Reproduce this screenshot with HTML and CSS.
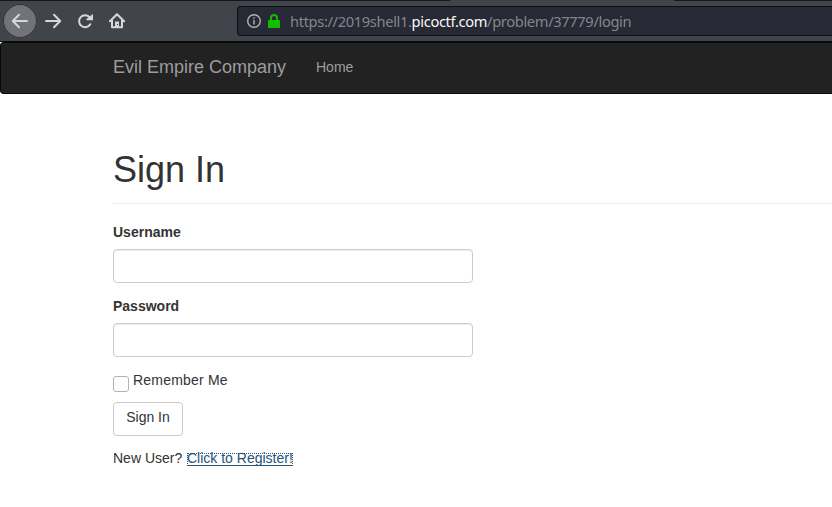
FILE: index.html
```html
<!DOCTYPE html>
<html lang="en">
<head>
<meta charset="utf-8">
<title>Sign In</title>
<link rel="stylesheet" href="styles.css">
</head>
<body>
<header class="toolbar">
  <button class="tool back" aria-label="Back"><svg width="34" height="34" viewBox="0 0 34 34"><path d="M24 17H10M16 10.8 9.8 17l6.2 6.2"/></svg></button>
  <button class="tool" aria-label="Forward"><svg width="32" height="32" viewBox="0 0 32 32"><path d="M9 16h14M17 9.8l6.2 6.2-6.2 6.2"/></svg></button>
  <button class="tool" aria-label="Reload"><svg width="32" height="32" viewBox="0 0 32 32"><path d="M21.3 19.2A6 6 0 1 1 20.6 12.2"/><path class="solid" d="M24 9v6.3h-6.6v-1.2z"/></svg></button>
  <button class="tool" aria-label="Home"><svg width="32" height="32" viewBox="0 0 32 32"><path d="M8.9 16.3 16 9.2l7.1 7.1M11 15v7.2h10V15"/><path class="solid" d="M14 16.5h4V23h-4z"/><path class="knob" d="M16 19h1v1h-1z"/></svg></button>
  <div class="address">
    <svg class="info" width="16" height="16" viewBox="0 0 16 16"><circle cx="8" cy="8" r="6.3"/><path d="M8 7v4.5M8 4.2v1.6"/></svg>
    <svg class="lock" width="12" height="14" viewBox="0 0 12 14"><path class="body" d="M1 6h10a1 1 0 0 1 1 1v6a1 1 0 0 1-1 1H1a1 1 0 0 1-1-1V7a1 1 0 0 1 1-1z"/><path class="shackle" d="M3 7V4a3 3 0 0 1 6 0v3"/></svg>
    <span class="url">https://2019shell1.<b>picoctf.com</b>/problem/37779/login</span>
  </div>
</header>
<nav class="navbar">
  <a class="brand">Evil Empire Company</a>
  <a class="home">Home</a>
</nav>
<main class="container">
  <div class="page-header"><h1>Sign In</h1></div>
  <form>
    <label class="field-label" for="username">Username</label>
    <input class="control" id="username" type="text">
    <label class="field-label" for="password">Password</label>
    <input class="control" id="password" type="password">
    <label class="remember"><input type="checkbox"><span>Remember Me</span></label>
    <button class="submit" type="button"><span>Sign In</span></button>
    <p class="register"><span>New User?</span><a>Click to Register!</a></p>
  </form>
</main>
</body>
</html>
```
FILE: styles.css
```css
* { box-sizing: border-box; }
body {
  margin: 0;
  height: 507px;
  overflow: hidden;
  background: #fff;
  color: #333;
  font: 14px/20px "Liberation Sans", Arial, sans-serif;
}
.toolbar {
  display: flex;
  align-items: center;
  height: 42px;
  padding-left: 3px;
  background: linear-gradient(90deg, #15151b 450px, #42444c 450px 674px, #15151b 674px) top / 100% 1px no-repeat #42444c;
  border-bottom: 1px solid #0c0c0d;
}
.tool {
  display: flex;
  width: 32px;
  height: 32px;
  padding: 0;
  border: 0;
  background: none;
}
.tool svg { fill: none; stroke: #d7d7d9; stroke-width: 2; stroke-linecap: round; stroke-linejoin: round; }
.tool .solid { fill: #d7d7d9; stroke: none; }
.tool .knob { fill: #42444c; stroke: none; }
.tool.back {
  width: 34px;
  height: 34px;
  border-radius: 50%;
  background: #727378;
  box-shadow: inset 0 0 0 1px #303137;
}
.address {
  display: flex;
  align-items: center;
  flex: 1;
  height: 30px;
  margin-left: 104px;
  padding-left: 8px;
  border: 1px solid #0e0f13;
  border-right: 0;
  border-radius: 4px 0 0 4px;
  background: #272935;
}
.info { fill: none; stroke: #b1b1b5; stroke-width: 1.4; }
.lock { margin: 0 10px 0 6px; }
.lock .body { fill: #12bc00; }
.lock .shackle { fill: none; stroke: #12bc00; stroke-width: 2; }
.url {
  color: #84868c;
  font: 14.67px/20px "Noto Sans", sans-serif;
  letter-spacing: -.35px;
  white-space: nowrap;
}
.url b { color: #f9f9fa; font-weight: 400; }
.navbar {
  display: flex;
  height: 52px;
  padding-left: 112px;
  border: 1px solid #080808;
  border-right: 0;
  border-radius: 4px 0 0 4px;
  background: #222;
  color: #9d9d9d;
}
.navbar a { padding-top: 14px; white-space: nowrap; }
.brand { width: 203px; font-size: 18px; }
.container { padding-left: 113px; }
.page-header { margin-top: 54px; padding-bottom: 13px; border-bottom: 1px solid #eee; }
h1 { margin: 0; padding-top: 2px; font-size: 36px; line-height: 40px; font-weight: 400; }
form { padding-top: 18px; }
.field-label { display: block; width: max-content; margin-bottom: 7px; font-weight: 700; }
.control {
  display: block;
  width: 360px;
  height: 34px;
  margin: 0 0 13px;
  padding: 6px 12px;
  border: 1px solid #ccc;
  border-radius: 4px;
  box-shadow: inset 0 1px 1px rgba(0, 0, 0, .075);
}
.remember { display: flex; width: max-content; height: 32px; letter-spacing: .2px; }
.remember input {
  appearance: none;
  width: 16px;
  height: 16px;
  margin: 6px 4px 0 0;
  border: 1px solid #b6b1aa;
  border-radius: 3px;
  background: #fff;
}
.submit {
  display: block;
  width: 70px;
  height: 34px;
  padding: 0 0 4px;
  border: 1px solid #ccc;
  border-radius: 4px;
  background: #fff;
  color: #333;
  font: inherit;
}
.register { display: flex; margin: 12px 0 0; }
.register span { width: 74px; }
.register a {
  height: 13px;
  margin-top: 5px;
  line-height: 10px;
  outline: 1px dotted #23527c;
  outline-offset: -1px;
  border-bottom: 1px solid #23527c;
  color: #23527c;
}
```
